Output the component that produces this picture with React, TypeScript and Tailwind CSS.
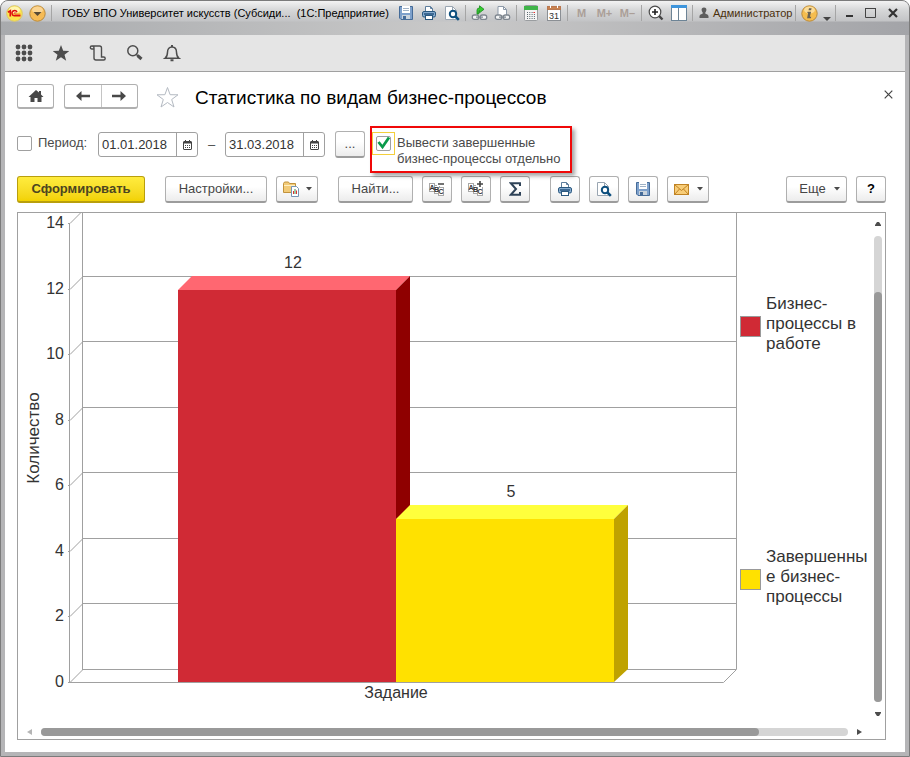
import type { ReactNode } from "react";

const TICKS = [14, 12, 10, 8, 6, 4, 2, 0];
const TICK_Y = [10, 76, 141, 207, 272, 338, 403, 469];

const toolButton =
  "flex h-[27px] items-center justify-center rounded-[3px] border border-[#b0b0b0] border-b-2 border-b-[#9c9c9c] bg-gradient-to-b from-white from-40% to-[#ececec] text-[#464646]";

function Caret() {
  return (
    <svg width="6" height="4" viewBox="0 0 6 4" aria-hidden="true">
      <path d="M0 0h6L3 3.5z" fill="#4a4a4a" />
    </svg>
  );
}

function SaveIcon() {
  return (
    <svg width="16" height="16" viewBox="0 0 16 16" aria-hidden="true">
      <path d="M1.5 1.5h13v13H3L1.5 13z" fill="#7da0cb" stroke="#456b98" />
      <rect x="4" y="1" width="8" height="7" fill="#fff" />
      <path d="M5 3.5h6M5 5.5h6" stroke="#9fb2c6" />
      <rect x="4" y="10" width="8" height="4" fill="#c9d3dd" />
      <rect x="5" y="11" width="3" height="3" fill="#456b98" />
    </svg>
  );
}

function PrinterIcon() {
  return (
    <svg width="16" height="16" viewBox="0 0 16 16" aria-hidden="true">
      <path d="M4.5 6.5v-5h5l2 2v3" fill="#fff" stroke="#5d7d9c" />
      <path d="M9.5 1.5v2h2" fill="none" stroke="#5d7d9c" />
      <rect x="1.500" y="6.500" width="13" height="5.500" rx="1.500" fill="#86abcf" stroke="#2a587f" />
      <path d="M3 9h10" stroke="#24537f" strokeWidth="1.500" />
      <rect x="4.500" y="10.500" width="7" height="4" fill="#fff" stroke="#2a587f" />
    </svg>
  );
}

function PreviewIcon() {
  return (
    <svg width="16" height="16" viewBox="0 0 16 16" aria-hidden="true">
      <path d="M1.500 1.500h7l4 4v9h-11z" fill="#fff" stroke="#9aa6b2" />
      <path d="M8.500 1.500v4h4" fill="none" stroke="#9aa6b2" />
      <circle cx="9" cy="9" r="3.200" fill="#fff" stroke="#0d4f7e" strokeWidth="2" />
      <path d="M11.500 11.500L14.800 14.800" stroke="#0d4f7e" strokeWidth="2.600" />
    </svg>
  );
}

function ChainLinks() {
  return (
    <g fill="none" stroke="#7f8790" strokeWidth="1.300">
      <rect x="0.800" y="10" width="6.400" height="4.400" rx="2" fill="#f3f4f5" />
      <rect x="8.800" y="10" width="6.400" height="4.400" rx="2" fill="#f3f4f5" />
      <path d="M4.500 12.200h7" />
    </g>
  );
}

function LinkArrowIcon() {
  return (
    <svg width="17" height="16" viewBox="0 0 16 16" aria-hidden="true">
      <ChainLinks />
      <path d="M5.500 9V5.200Q5.500 3 8 3V.8l4.500 3.500L8 7.800V5.500q-.8 0-.8 1V9z" fill="#35cc30" stroke="#188a1c" strokeWidth="0.800" />
    </svg>
  );
}

function LinkPageIcon() {
  return (
    <svg width="17" height="16" viewBox="0 0 16 16" aria-hidden="true">
      <path d="M3.500 10V1.500H9l3 3V10" fill="#fff" stroke="#8c99a8" />
      <path d="M9 1.500v3h3" fill="none" stroke="#8c99a8" />
      <ChainLinks />
    </svg>
  );
}

function CalculatorIcon() {
  return (
    <svg width="14" height="16" viewBox="0 0 14 16" aria-hidden="true">
      <rect x="0.500" y="0.500" width="13" height="15" rx="1" fill="#f4f4f4" stroke="#9a9da0" />
      <rect x="0" y="1" width="14" height="4" fill="#3fb449" />
      <path d="M3 7.500h8M3 9.500h8M3 11.500h8M3 13.500h8" stroke="#5c6a70" strokeDasharray="1 1.300" />
      <path d="M9.500 7.500h1.500" stroke="#e33" />
    </svg>
  );
}

function MonthIcon() {
  return (
    <svg width="14" height="16" viewBox="0 0 14 16" aria-hidden="true">
      <rect x="0.500" y="1.500" width="13" height="14" fill="#fff" stroke="#8b8f94" />
      <rect x="0.500" y="1.500" width="13" height="3" fill="#c9824f" stroke="#b97850" />
      <path d="M3.500 0v3M10.500 0v3" stroke="#fff" />
      <text x="7" y="13.500" textAnchor="middle" fontSize="9" fontFamily="Liberation Sans, sans-serif" fill="#333">
        31
      </text>
    </svg>
  );
}

function ZoomIcon() {
  return (
    <svg width="16" height="16" viewBox="0 0 16 16" aria-hidden="true">
      <circle cx="7" cy="7" r="5.800" fill="#fff" stroke="#4b4b4b" strokeWidth="1.200" />
      <path d="M4 7h6M7 4v6" stroke="#222" strokeWidth="1.600" />
      <path d="M11.200 11.200L14.500 14.500" stroke="#444" strokeWidth="2.400" />
    </svg>
  );
}

function SplitIcon() {
  return (
    <svg width="16" height="16" viewBox="0 0 16 16" aria-hidden="true">
      <rect x="0.500" y="0.500" width="15" height="15" fill="#fff" stroke="#6d8496" />
      <rect x="0" y="0" width="16" height="3" fill="#3e95dc" />
      <path d="M7.500 3v12" stroke="#6d8496" />
    </svg>
  );
}

function UserIcon() {
  return (
    <svg width="10" height="12" viewBox="0 0 10 12" className="shrink-0" aria-hidden="true">
      <path d="M5 .5c1.800 0 2.500 1.200 2.400 2.600C7.300 4.300 6.700 5 6.300 5.600v1c.5.6 3 .8 3.200 2.400v2h-9V9c.2-1.600 2.700-1.800 3.200-2.400v-1C3.300 5 2.700 4.300 2.600 3.100 2.500 1.700 3.200.5 5 .5z" fill="#5d5d5d" />
    </svg>
  );
}

function InfoIcon() {
  return (
    <svg width="17" height="17" viewBox="0 0 17 17" aria-hidden="true">
      <circle cx="8.500" cy="8.500" r="7.700" fill="#f5bd4f" stroke="#b98a3c" />
      <ellipse cx="8.500" cy="5" rx="5.500" ry="3.500" fill="#fbdc98" />
      <path d="M8 3.300h2.600l-.5 2H7.500zM6.600 6.700h3.500L8.900 11.800h1.300l-.3 1.400H6.100l1-5.100H6.300z" fill="#6a6253" />
    </svg>
  );
}

function LogoIcon() {
  return (
    <svg width="17" height="17" viewBox="0 0 17 17" aria-hidden="true">
      <circle cx="8.500" cy="8.500" r="7.800" fill="#fbe64d" stroke="#d9c36a" />
      <ellipse cx="8.500" cy="5" rx="5.500" ry="3.500" fill="#fff6ae" />
      <path d="M2 7.200L4.300 5.800V11.500" fill="none" stroke="#e01010" strokeWidth="1.700" />
      <path d="M11 7.200A2.600 2.600 0 1 0 9 10.800H14.500" fill="none" stroke="#e01010" strokeWidth="1.500" />
      <path d="M9.800 8.400A.8.800 0 1 0 9.100 9.200H14.500" fill="none" stroke="#e01010" strokeWidth="0.700" />
    </svg>
  );
}

function MenuIcon() {
  return (
    <svg width="17" height="17" viewBox="0 0 17 17" aria-hidden="true">
      <circle cx="8.500" cy="8.500" r="7.700" fill="#f6bb55" stroke="#b98a3c" />
      <ellipse cx="8.500" cy="5" rx="5.500" ry="3.500" fill="#fbd592" />
      <path d="M4.500 7h8l-4 4z" fill="#574a35" />
    </svg>
  );
}

function DateIcon() {
  return (
    <svg width="9" height="10" viewBox="0 0 9 10" aria-hidden="true">
      <rect x="0.500" y="1.500" width="8" height="8" rx="0.500" fill="#fff" stroke="#444" />
      <path d="M0 2.500h9M2.500 0v2M6.500 0v2" stroke="#444" />
      <path d="M1 3.500h7" stroke="#444" strokeOpacity="0.500" />
      <path d="M2 5.500h5M2 7.500h5" stroke="#444" strokeDasharray="1 1" />
    </svg>
  );
}

function GroupIcon({ plus }: { plus: boolean }) {
  return (
    <svg width="16" height="16" viewBox="0 0 16 16" aria-hidden="true">
      <g fill="#fff" stroke="#a8a8a8">
        <rect x="0.500" y="2.500" width="5" height="8" />
        <rect x="5.500" y="4.500" width="5" height="8" />
        <rect x="9.500" y="6.500" width="5" height="8" />
      </g>
      <g fontFamily="Liberation Sans, sans-serif" fontSize="7" fontWeight="bold" fill="#333">
        <text x="0.500" y="9">A</text>
        <text x="5" y="11">B</text>
        <text x="9.500" y="13">C</text>
      </g>
      <path d={plus ? "M8 3h8M12 -1v8" : "M8 3h8"} stroke="#fff" strokeWidth="4" />
      <path d={plus ? "M9 3h6M12 0v6" : "M9 3h6"} stroke="#444" strokeWidth="1.600" />
    </svg>
  );
}

function FolderIcon() {
  return (
    <svg width="17" height="16" viewBox="0 0 17 16" aria-hidden="true">
      <path d="M.5 2.500l1-1.500h4l1 1.500h6v9H.5z" fill="#f2cb78" stroke="#c1923c" />
      <path d="M1 4.500h11" stroke="#fff0c4" />
      <path d="M8.500 5.500h5l2 2v8h-7z" fill="#fff" stroke="#7595b5" />
      <path d="M10.500 13v-3M13.500 13V9.500" stroke="#d33" />
      <path d="M12 13v-5" stroke="#3a8f4a" />
    </svg>
  );
}

function MailIcon() {
  return (
    <svg width="15" height="11" viewBox="0 0 15 11" className="shrink-0" aria-hidden="true">
      <rect x="0.500" y="0.500" width="14" height="10" fill="#f8cd78" stroke="#c08324" />
      <path d="M.5.5l7 6 7-6M.5 10.500l5-5.500M14.500 10.500L9.500 5" fill="none" stroke="#c08324" />
    </svg>
  );
}

function Slot({ label, narrow = false, children }: { label: string; narrow?: boolean; children: ReactNode }) {
  return (
    <button
      type="button"
      aria-label={label}
      className={`flex h-5 shrink-0 items-center justify-center ${narrow ? "w-[22px]" : "w-[23px]"}`}
    >
      {children}
    </button>
  );
}

function Divider() {
  return <span className="mx-[2px] h-4 w-px shrink-0 bg-[#a5a5a5]" />;
}

function TitleBar() {
  return (
    <header className="flex h-[34px] items-start bg-[linear-gradient(to_bottom,#f3f3f3_0px,#d6d7d8_9px,#c3c4c6_20px,transparent_21px),linear-gradient(to_right,#a8aaad,#c9c9c9_50%,#a3a4a8)] pr-[5px] pl-[2px]">
      <div className="flex h-6 min-w-0 flex-1 items-center">
        <Slot label="1С:Предприятие"><LogoIcon /></Slot>
        <Slot label="Главное меню"><MenuIcon /></Slot>
        <Divider />
        <h1 className="ml-2 min-w-0 truncate text-[11px] whitespace-pre text-black">
          ГОБУ ВПО Университет искусств (Субсиди...  (1С:Предприятие)
        </h1>
      </div>
      <div className="flex h-6 shrink-0 items-center">
        <Slot label="Сохранить"><SaveIcon /></Slot>
        <Slot label="Печать"><PrinterIcon /></Slot>
        <Slot label="Просмотр"><PreviewIcon /></Slot>
        <Divider />
        <Slot label="Перейти по ссылке"><LinkArrowIcon /></Slot>
        <Slot label="Получить ссылку"><LinkPageIcon /></Slot>
        <Divider />
        <Slot label="Калькулятор"><CalculatorIcon /></Slot>
        <Slot label="Календарь"><MonthIcon /></Slot>
        <Divider />
        {["M", "M+", "M–"].map((key) => (
          <button key={key} type="button" className="w-[23px] text-[11px] font-bold text-[#ab9f98]">
            {key}
          </button>
        ))}
        <Divider />
        <Slot label="Масштаб"><ZoomIcon /></Slot>
        <Slot label="Панели"><SplitIcon /></Slot>
        <Divider />
        <button type="button" className="flex w-[98px] items-center gap-1 pl-1 text-[11px] text-[#4a300c]">
          <UserIcon />
          Администратор
        </button>
        <Divider />
        <Slot label="Справка"><InfoIcon /></Slot>
        <button type="button" aria-label="Ещё" className="flex h-5 w-3 items-end justify-center pb-[2px]">
          <svg width="8" height="4" viewBox="0 0 8 4" aria-hidden="true"><path d="M0 0h8L4 4z" fill="#444" /></svg>
        </button>
        <Divider />
        <Slot narrow label="Свернуть">
          <svg width="12" height="12" viewBox="0 0 12 12" aria-hidden="true"><path d="M3 9h7" stroke="#333" strokeWidth="2" /></svg>
        </Slot>
        <Slot narrow label="Развернуть">
          <svg width="12" height="12" viewBox="0 0 12 12" aria-hidden="true">
            <path d="M.5 1.500h10v9H.5zM0 1.500h11" fill="none" stroke="#444" />
          </svg>
        </Slot>
        <Slot narrow label="Закрыть">
          <svg width="12" height="12" viewBox="0 0 12 12" aria-hidden="true"><path d="M2 2l8 8M10 2l-8 8" stroke="#333" strokeWidth="2.200" /></svg>
        </Slot>
      </div>
    </header>
  );
}

function NavBar() {
  const item = "flex h-8 w-[37px] items-center justify-center";
  return (
    <nav className="flex h-[37px] items-center border-b border-[#a0a0a0] bg-[#e5e5e5]">
      <button type="button" aria-label="Разделы" className={item}>
        <svg width="18" height="18" viewBox="0 0 18 18" fill="#4d4d4d" aria-hidden="true">
          {[3, 9, 15].map((y) => [3, 9, 15].map((x) => <circle key={`${x}-${y}`} cx={x} cy={y} r="2.400" />))}
        </svg>
      </button>
      <button type="button" aria-label="Избранное" className={item}>
        <svg width="18" height="18" viewBox="0 0 18 18" aria-hidden="true">
          <path d="M9 1l2.200 5.700 6.100.3-4.800 3.800 1.700 5.900L9 13.300l-5.200 3.400 1.700-5.900L.7 7l6.100-.3z" fill="#4d4d4d" />
        </svg>
      </button>
      <button type="button" aria-label="История" className={item}>
        <svg width="18" height="18" viewBox="0 0 18 18" fill="none" stroke="#4d4d4d" strokeWidth="1.400" aria-hidden="true">
          <path d="M5 5H2.800a1.500 1.500 0 1 1 0-3H10.500a2 2 0 0 1 2 2v9h2.200a1.500 1.500 0 1 1 0 3H7a2 2 0 0 1-2-2V4a2 2 0 0 0-2-2" />
        </svg>
      </button>
      <button type="button" aria-label="Поиск" className={item}>
        <svg width="18" height="18" viewBox="0 0 18 18" fill="none" stroke="#4d4d4d" aria-hidden="true">
          <circle cx="6.800" cy="6.800" r="5" strokeWidth="1.500" />
          <path d="M10.500 10.500l1.500 1.500" strokeWidth="1.500" />
          <path d="M11.500 11.500l4 3.500" strokeWidth="3" />
        </svg>
      </button>
      <button type="button" aria-label="Оповещения" className={item}>
        <svg width="18" height="18" viewBox="0 0 18 18" fill="none" stroke="#4d4d4d" strokeWidth="1.500" aria-hidden="true">
          <path d="M2 14.300c2-1.500 2.500-3 2.500-6C4.500 5 6 3 9 3s4.500 2 4.500 5.300c0 3 .5 4.500 2.500 6z" />
          <path d="M9 1v2M7.500 16.300h3" strokeWidth="2" />
        </svg>
      </button>
    </nav>
  );
}

function Heading() {
  return (
    <div className="flex items-start">
      <button type="button" aria-label="Домой" className="flex h-[25px] w-[37px] items-center justify-center rounded-[3px] border border-b-2 border-[#b0b0b0] bg-white">
        <svg width="16" height="12" viewBox="0 0 16 12" aria-hidden="true">
          <path d="M8 0l3 2.600V1h2v3.400L15.500 7H13.500v5H9.500V8h-3v4h-4V7H.5z" fill="#484848" />
        </svg>
      </button>
      <div className="ml-[10px] flex h-[25px] w-[74px] rounded-[3px] border border-b-2 border-[#b0b0b0] bg-white">
        <button type="button" aria-label="Назад" className="flex flex-1 items-center justify-center border-r border-[#c4c4c4]">
          <svg width="14" height="10" viewBox="0 0 14 10" aria-hidden="true"><path d="M0 5l5.500-5v3.800H14v2.400H5.500V10z" fill="#484848" /></svg>
        </button>
        <button type="button" aria-label="Вперед" className="flex flex-1 items-center justify-center">
          <svg width="14" height="10" viewBox="0 0 14 10" aria-hidden="true"><path d="M14 5L8.500 0v3.800H0v2.400h8.500V10z" fill="#484848" /></svg>
        </button>
      </div>
      <button type="button" aria-label="Добавить в избранное" className="ml-[18px] mt-[2px]">
        <svg width="23" height="23" viewBox="0 0 23 23" aria-hidden="true">
          <path d="M11.500 1.500l2.600 7.200 7.900.1-6.300 4.700 2.300 7.500-6.500-4.500-6.500 4.500 2.300-7.500L1 8.800l7.900-.1z" fill="#fff" stroke="#b4bac2" />
        </svg>
      </button>
      <h2 className="ml-4 mt-[1px] min-w-0 flex-1 text-[19px] leading-[26px] text-black">Статистика по видам бизнес-процессов</h2>
      <button type="button" aria-label="Закрыть" className="-mr-[7px] mt-[6px]">
        <svg width="9" height="9" viewBox="0 0 9 9" aria-hidden="true"><path d="M.7.7l7.600 7.600M8.300.7L.7 8.300" stroke="#444" strokeWidth="1.200" /></svg>
      </button>
    </div>
  );
}

function DateField({ label, value }: { label: string; value: string }) {
  return (
    <div className="flex h-[25px] w-[100px] overflow-hidden rounded-[3px] border border-[#a0a0a0] bg-white">
      <input aria-label={label} defaultValue={value} className="w-0 flex-1 pl-[3px] text-[13px] text-[#333] outline-none" />
      <button type="button" aria-label="Выбрать дату" className="flex w-[21px] items-center justify-center border-l border-[#a0a0a0]">
        <DateIcon />
      </button>
    </div>
  );
}

function Filters() {
  return (
    <div className="mt-[15px] flex items-start text-[13px] text-[#4a4a4a]">
      <label className="mt-[5px] flex h-[25px] w-[81px] items-center gap-[6px] pb-px">
        <input type="checkbox" className="size-[15px] shrink-0 appearance-none rounded-[2px] border border-[#a0a0a0] bg-white" />
        Период:
      </label>
      <div className="mt-[5px] flex items-center">
        <DateField label="Начало периода" value="01.01.2018" />
        <span className="w-[27px] text-center">–</span>
        <DateField label="Конец периода" value="31.03.2018" />
        <button type="button" className={`${toolButton} ml-[10px] w-[30px] text-[13px]`}>...</button>
      </div>
      <label className="relative ml-[5px] flex h-[47px] w-[202px] items-start border-2 border-[#f00808] pt-1 shadow-[3px_3px_4px_rgba(0,0,0,0.35)]">
        <span className="grid size-[23px] shrink-0 place-items-center border border-[#f4cf3c]">
          <input type="checkbox" defaultChecked className="col-start-1 row-start-1 size-[15px] appearance-none rounded-[2px] border border-[#a0a0a0] bg-white" />
          <svg className="pointer-events-none col-start-1 row-start-1" width="15" height="15" viewBox="0 0 15 15" aria-hidden="true">
            <path d="M2.500 6l4 5L13 1.500" fill="none" stroke="#0b9b4b" strokeWidth="2.800" />
          </svg>
        </span>
        <span className="ml-[2px] mt-[3px] leading-4 whitespace-nowrap">
          Вывести завершенные
          <br />
          бизнес-процессы отдельно
        </span>
      </label>
    </div>
  );
}

function Toolbar() {
  return (
    <div className="mt-[3px] flex items-center text-[13px]">
      <button type="button" className="h-[27px] w-[128px] rounded-[3px] border border-b-2 border-[#b99f0c] bg-gradient-to-b from-[#ffec3d] to-[#f2d200] font-bold text-[#4c4520]">
        Сформировать
      </button>
      <button type="button" className={`${toolButton} ml-5 w-[102px]`}>Настройки...</button>
      <button type="button" aria-label="Варианты отчета" className={`${toolButton} ml-[9px] w-[42px] gap-[6px]`}><FolderIcon /><Caret /></button>
      <button type="button" className={`${toolButton} ml-5 w-[75px]`}>Найти...</button>
      <div className="ml-[9px] flex gap-[9px]">
        <button type="button" aria-label="Свернуть группы" className={`${toolButton} w-[30px]`}><GroupIcon plus={false} /></button>
        <button type="button" aria-label="Развернуть группы" className={`${toolButton} w-[30px]`}><GroupIcon plus /></button>
        <button type="button" aria-label="Сумма" className={`${toolButton} w-[30px]`}>
          <svg width="12" height="14" viewBox="0 0 12 14" aria-hidden="true">
            <path d="M11 4V1.200H1.800L7 7l-5.200 5.800H11V10" fill="none" stroke="#2f4358" strokeWidth="2" />
          </svg>
        </button>
      </div>
      <div className="ml-5 flex gap-[9px]">
        <button type="button" aria-label="Печать" className={`${toolButton} w-[30px]`}><PrinterIcon /></button>
        <button type="button" aria-label="Просмотр" className={`${toolButton} w-[30px]`}><PreviewIcon /></button>
        <button type="button" aria-label="Сохранить" className={`${toolButton} w-[30px]`}><SaveIcon /></button>
        <button type="button" aria-label="Отправить" className={`${toolButton} w-[42px] gap-2`}><MailIcon /><Caret /></button>
      </div>
      <div className="ml-auto flex gap-[9px]">
        <button type="button" className={`${toolButton} w-[61px] gap-2 pl-[6px]`}>Еще <Caret /></button>
        <button type="button" aria-label="Справка" className="flex h-[27px] w-[30px] items-center justify-center rounded-[3px] border border-b-2 border-[#b0b0b0] border-b-[#9c9c9c] bg-gradient-to-b from-white from-40% to-[#ececec] font-bold text-black">?</button>
      </div>
    </div>
  );
}

function Chart() {
  return (
    <svg width="719" height="500" viewBox="0 0 719 500" className="shrink-0" role="img" aria-label="Количество бизнес-процессов">
      <g stroke="#a0a0a0" fill="none">
        <path d="M51.500 10v459.500h654L718.500 456.500H64.500V0M718.500 0v456" />
        {TICK_Y.map((y) => (
          <path key={y} d={`M50 ${y + 0.5}h2l13-13`} />
        ))}
        {TICK_Y.slice(1).map((y) => (
          <path key={y} d={`M64 ${y - 12.5}h654`} />
        ))}
      </g>
      <path d="M160 77l14-14h218l-14 14z" fill="#ff6771" />
      <path d="M378 77l14-14v392l-14 14z" fill="#8f0000" />
      <path d="M160 77h218v392H160z" fill="#d02a35" />
      <path d="M378 306l14-14h218l-14 14z" fill="#ffff3c" />
      <path d="M596 306l14-14v164l-14 13z" fill="#bfa200" />
      <path d="M378 306h218v163H378z" fill="#ffe100" />
      <g fontFamily="Liberation Sans, Arial, sans-serif" fontSize="16" fill="#333">
        {TICKS.map((tick, i) => (
          <text key={tick} x="46" y={TICK_Y[i] + 5} textAnchor="end">{tick}</text>
        ))}
        <text x="275" y="55" textAnchor="middle">12</text>
        <text x="493" y="284" textAnchor="middle">5</text>
        <text x="378" y="485" textAnchor="middle">Задание</text>
        <text transform="translate(21 225) rotate(-90)" textAnchor="middle" fontSize="17">Количество</text>
      </g>
    </svg>
  );
}

function LegendItem({ swatch, lines }: { swatch: string; lines: string[] }) {
  return (
    <li className="flex items-center gap-[5px]">
      <span className={`mt-1 size-[21px] shrink-0 border border-[#999] ${swatch}`} />
      <span className="text-[17px] leading-5 whitespace-nowrap text-[#333]">
        {lines.map((line) => (
          <span key={line} className="block">{line}</span>
        ))}
      </span>
    </li>
  );
}

function Report() {
  return (
    <main className="mt-[9px] grid flex-1 grid-cols-[minmax(0,1fr)_14px] grid-rows-[minmax(0,1fr)_14px] border border-[#a0a0a0]">
      <div className="flex overflow-hidden">
        <Chart />
        <ul className="ml-[3px] flex flex-col gap-[193px] pt-[81px]">
          <LegendItem swatch="bg-[#d02a35]" lines={["Бизнес-", "процессы в", "работе"]} />
          <LegendItem swatch="bg-[#ffe100]" lines={["Завершенны", "е бизнес-", "процессы"]} />
        </ul>
      </div>
      <div className="flex flex-col items-center pt-2 pb-2">
        <svg width="6" height="5" viewBox="0 0 6 5" aria-hidden="true"><path d="M0 5V4L2 1h2l2 3v1z" fill="#4d4d4d" /></svg>
        <div className="mt-[10px] flex w-2 flex-1 flex-col justify-end rounded-full bg-[#d5d5d5]">
          <div className="h-[88%] rounded-full bg-[#999]" />
        </div>
        <svg className="mt-[10px]" width="6" height="5" viewBox="0 0 6 5" aria-hidden="true"><path d="M0 0v1l2 3h2l2-3V0z" fill="#4d4d4d" /></svg>
      </div>
      <div className="flex items-center pl-[9px] pr-[9px]">
        <svg width="5" height="6" viewBox="0 0 5 6" aria-hidden="true"><path d="M5 0v6L0 3z" fill="#b5b5b5" /></svg>
        <div className="mx-[9px] h-2 flex-1 rounded-full bg-[#d5d5d5]">
          <div className="h-2 w-[89%] rounded-full bg-[#999]" />
        </div>
        <svg width="5" height="6" viewBox="0 0 5 6" aria-hidden="true"><path d="M0 0v6l5-3z" fill="#4d4d4d" /></svg>
      </div>
    </main>
  );
}

export default function App() {
  return (
    <div className="flex min-h-screen flex-col overflow-hidden rounded-t-lg border border-[#7b7b7b] bg-[#b5b5b7] font-['Liberation_Sans',Arial,sans-serif]">
      <TitleBar />
      <div className="mx-1 mb-1 flex flex-1 flex-col bg-white">
        <NavBar />
        <div className="flex flex-1 flex-col px-3 pt-3 pr-[19px] pb-3">
          <Heading />
          <Filters />
          <Toolbar />
          <Report />
        </div>
      </div>
    </div>
  );
}
